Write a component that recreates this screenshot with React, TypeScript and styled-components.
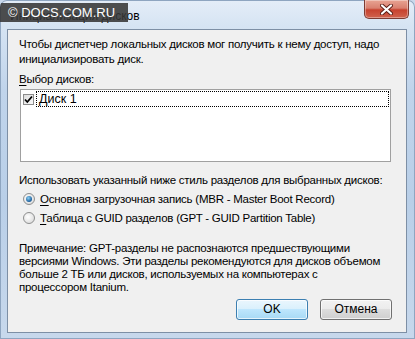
import React from "react";
import styled, { createGlobalStyle } from "styled-components";

const Global = createGlobalStyle`
  html, body { margin: 0; padding: 0; background: #c9d9ec; }
  body { font-family: "Liberation Sans", Arial, sans-serif; }
`;

const Window = styled.div`
  position: relative;
  width: 415px;
  height: 339px;
  box-sizing: border-box;
  display: flex;
  flex-direction: column;
  padding: 0 8px 6px 7px;
  border-radius: 7px 7px 0 0;
  background: linear-gradient(
    180deg,
    #e4edf8 0px,
    #d6e4f3 26px,
    #c0d4eb 90px,
    #b9cfe8 200px,
    #c7d8ec 339px
  );
  box-shadow: inset 0 0 0 1px #8ea5c0;
  overflow: hidden;
`;

const TitleBar = styled.div`
  height: 29px;
  flex: none;
  display: flex;
  align-items: flex-start;
  justify-content: space-between;
`;

const Title = styled.div`
  font-size: 12px;
  line-height: 14px;
  color: #000;
  padding: 9px 0 0 3px;
`;

const CloseButton = styled.div`
  width: 45px;
  height: 19px;
  margin-right: -2px;
  box-sizing: border-box;
  border: 1px solid #7c3b33;
  border-top: none;
  border-radius: 0 0 5px 5px;
  background: linear-gradient(180deg, #e8a493 0%, #d98070 45%, #c7422f 55%, #d0634e 100%);
  box-shadow: inset 0 0 0 1px rgba(255, 255, 255, 0.35);
  display: flex;
  align-items: center;
  justify-content: center;
`;

const Client = styled.div`
  flex: 1;
  min-height: 0;
  display: flex;
  flex-direction: column;
  background: #f0f0f0;
  border: 1px solid #7d8fa5;
  padding: 7px 14px 12px 11px;
  font-size: 11.5px;
  letter-spacing: -0.25px;
  color: #000;
  white-space: nowrap;
`;

const Para = styled.div<{ $lh: number; $mt?: number }>`
  line-height: ${(p) => p.$lh}px;
  margin-top: ${(p) => p.$mt ?? 0}px;
`;

const Key = styled.span`
  text-decoration: underline;
  text-underline-offset: 2px;
`;

const ListBox = styled.div`
  margin: 3px 0 0 1px;
  width: 371px;
  height: 73px;
  flex: none;
  box-sizing: border-box;
  background: #fff;
  border: 1px solid #a0a0a0;
  padding: 1px;
`;

const ListItem = styled.div`
  display: flex;
  align-items: center;
  height: 16px;
`;

const CheckBox = styled.div`
  width: 11px;
  height: 11px;
  box-sizing: border-box;
  border: 1px solid #8b8b8b;
  background: linear-gradient(135deg, #dcdcdc, #fafafa);
  margin: 0 2px 0 1px;
  display: flex;
  align-items: center;
  justify-content: center;
`;

const FocusLabel = styled.div`
  flex: 1;
  height: 16px;
  box-sizing: border-box;
  border: 1px dotted #000;
  padding-left: 2px;
  line-height: 14px;
  font-size: 12.5px;
  letter-spacing: 0;
`;

const RadioGroup = styled.div`
  margin-top: 2px;
  display: flex;
  flex-direction: column;
`;

const RadioRow = styled.div`
  height: 19px;
  display: flex;
  align-items: center;
  padding-left: 4px;
`;

const Radio = styled.div<{ $checked?: boolean }>`
  width: 12px;
  height: 12px;
  box-sizing: border-box;
  border-radius: 50%;
  border: 1px solid #8e8f8f;
  background: radial-gradient(circle at 40% 40%, #ffffff, #d4d4d4);
  margin-right: 5px;
  display: flex;
  align-items: center;
  justify-content: center;
  &::after {
    content: "";
    display: ${(p) => (p.$checked ? "block" : "none")};
    width: 6px;
    height: 6px;
    border-radius: 50%;
    background: radial-gradient(circle at 40% 35%, #8ad0f5, #1b5d9a 70%, #123f6e);
  }
`;

const ButtonRow = styled.div`
  margin-top: 4px;
  display: flex;
  justify-content: flex-end;
  gap: 12px;
`;

const Button = styled.div<{ $default?: boolean }>`
  width: 72px;
  height: 21px;
  box-sizing: border-box;
  border-radius: 3px;
  border: 1px solid ${(p) => (p.$default ? "#3c7fb1" : "#707070")};
  background: ${(p) =>
    p.$default
      ? "linear-gradient(180deg, #eaf6fd 0%, #d9f0fc 50%, #bee6fd 50%, #a7d9f5 100%)"
      : "linear-gradient(180deg, #f2f2f2 0%, #ebebeb 50%, #dddddd 50%, #cfcfcf 100%)"};
  box-shadow: inset 0 0 0 1px rgba(255, 255, 255, 0.7);
  display: flex;
  align-items: center;
  justify-content: center;
  font-size: 12px;
  letter-spacing: 0;
`;

const Watermark = styled.div`
  position: absolute;
  left: 0;
  top: 3px;
  width: 128px;
  height: 19px;
  background: rgba(55, 55, 55, 0.88);
  color: #fff;
  font-family: "Liberation Sans", Arial, sans-serif;
  font-size: 13px;
  line-height: 19px;
  padding-left: 8px;
  box-sizing: border-box;
  white-space: nowrap;
`;

export default function App() {
  return (
    <>
      <Global />
      <Window>
        <TitleBar>
          <Title>Инициализация дисков</Title>
          <CloseButton>
            <svg width="13" height="11" viewBox="0 0 13 11">
              <path
                d="M2 1.5 L11 9.5 M11 1.5 L2 9.5"
                stroke="#5a1e16"
                strokeWidth="4"
                strokeLinecap="round"
              />
              <path
                d="M2 1.5 L11 9.5 M11 1.5 L2 9.5"
                stroke="#ffffff"
                strokeWidth="2.2"
                strokeLinecap="round"
              />
            </svg>
          </CloseButton>
        </TitleBar>
        <Client>
          <Para $lh={14.5}>
            Чтобы диспетчер локальных дисков мог получить к нему доступ, надо
            <br />
            инициализировать диск.
          </Para>
          <Para $lh={14} $mt={6}>
            <Key>В</Key>ыбор дисков:
          </Para>
          <ListBox>
            <ListItem>
              <CheckBox>
                <svg width="9" height="9" viewBox="0 0 9 9">
                  <path d="M1 4.5 L3.3 7 L8 1.5" stroke="#000" strokeWidth="1.8" fill="none" />
                </svg>
              </CheckBox>
              <FocusLabel>Диск 1</FocusLabel>
            </ListItem>
          </ListBox>
          <Para $lh={14} $mt={11}>
            Использовать указанный ниже стиль разделов для выбранных дисков:
          </Para>
          <RadioGroup>
            <RadioRow>
              <Radio $checked />
              <span>
                <Key>О</Key>сновная загрузочная запись (MBR - Master Boot Record)
              </span>
            </RadioRow>
            <RadioRow>
              <Radio />
              <span>
                <Key>Т</Key>аблица с GUID разделов (GPT - GUID Partition Table)
              </span>
            </RadioRow>
          </RadioGroup>
          <Para $lh={13.3} $mt={14.5}>
            Примечание: GPT-разделы не распознаются предшествующими
            <br />
            версиями Windows. Эти разделы рекомендуются для дисков объемом
            <br />
            больше 2 ТБ или дисков, используемых на компьютерах с
            <br />
            процессором Itanium.
          </Para>
          <ButtonRow>
            <Button $default>OK</Button>
            <Button>Отмена</Button>
          </ButtonRow>
        </Client>
        <Watermark>© DOCS.COM.RU</Watermark>
      </Window>
    </>
  );
}
